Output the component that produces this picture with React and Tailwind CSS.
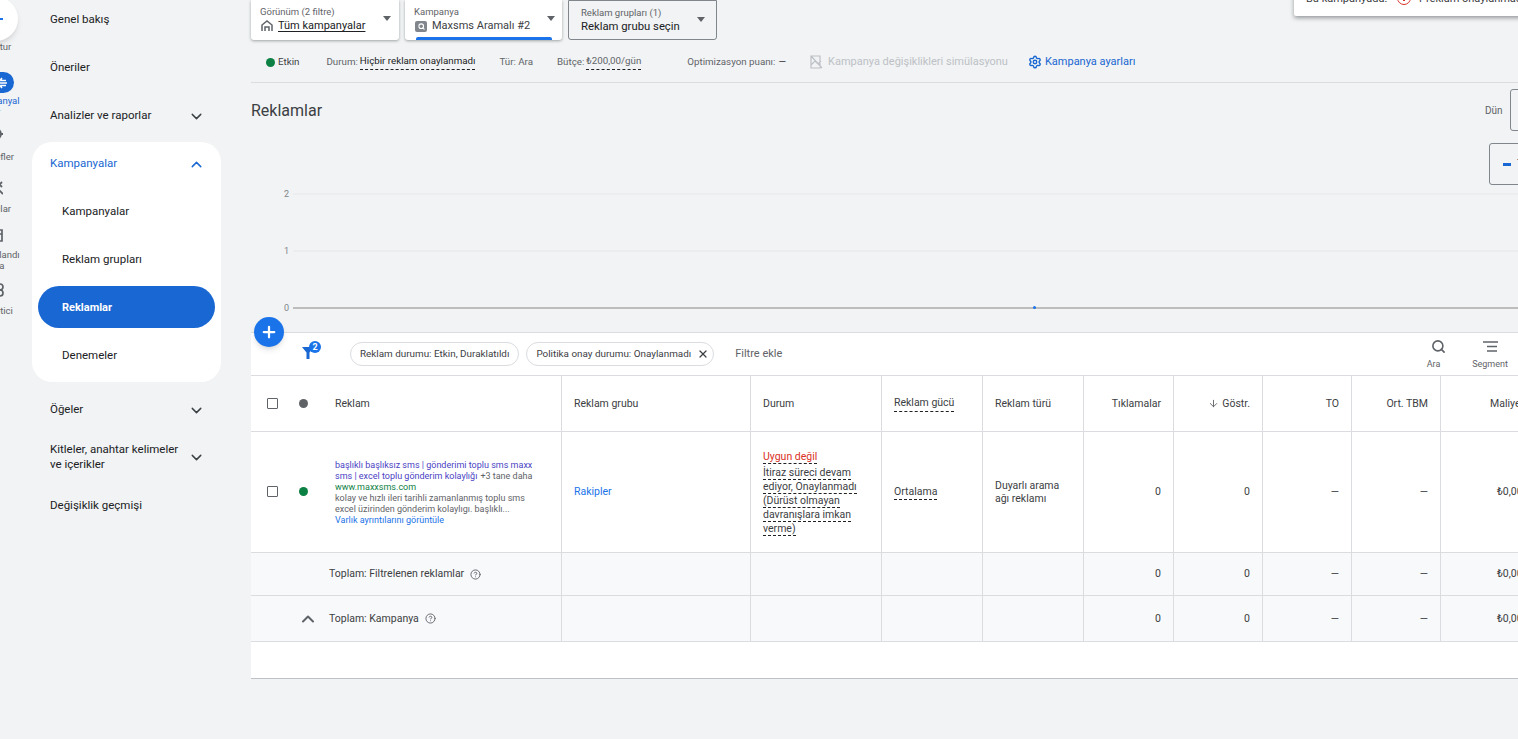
import { ChevronDown, ChevronUp, Search, X, ArrowDown, CircleHelp, Settings, Plus } from 'lucide-react'

const cols = 'grid grid-cols-[311px_189px_131px_101px_101px_90px_89px_89px_89px_120px]'
const cell = 'border-r border-[#dadce0] flex items-center text-[10.5px]'
const ink = 'text-[#3c4043]'
const dashed = 'border-b border-dashed border-[#202124]'

function NavItem({ label, sub, active, open, chevron, className = '' }) {
  return (
    <div className={`w-[189px] h-12 flex items-center text-[11.5px] shrink-0 ${sub ? 'pl-[30px] pr-3' : 'pl-[18px] pr-[16px]'} ${className}`}>
      <span className={active ? 'text-[#1967d2]' : 'text-[#202124]'}>{label}</span>
      {chevron && (open
        ? <ChevronUp className="ml-auto w-[17px] h-[17px] text-[#1967d2]" />
        : <ChevronDown className="ml-auto w-[17px] h-[17px] text-[#3c4043]" />)}
    </div>
  )
}

function Rail() {
  return (
    <div className="w-[80px] -ml-[44px] shrink-0 flex flex-col items-center text-[9.5px] leading-[11px] text-[#5f6368] text-center">
      <div className="w-[44px] h-[44px] mt-[-3px] rounded-full bg-white shadow-md flex items-center justify-center shrink-0">
        <div className="w-[14px] h-[2px] bg-[#1a73e8]" />
      </div>
      <div className="h-[12px] leading-[12px]">Oluştur</div>
      <div className="mt-[19px] w-[36px] h-[21px] rounded-full bg-[#1967d2] flex items-center justify-end pr-[7px] shrink-0">
        <svg width="14" height="12" viewBox="0 0 14 12" fill="none" stroke="white" strokeWidth="1.6"><path d="M9 1 5 6l4 5M5 6h9M8 3.5h5M8 8.5h5" /></svg>
      </div>
      <div className="text-[#1967d2] mt-[2px] h-[11px]">Kampanyal</div>
      <div className="text-[#1967d2] h-[11px]">ar</div>
      <svg className="mt-[10px] shrink-0" width="14" height="14" viewBox="0 0 14 14" fill="none" stroke="currentColor" strokeWidth="1.8"><circle cx="7" cy="7" r="5" /><path d="M7 0v14M0 7h14" /></svg>
      <div className="mt-[10px] h-[11px]">Hedefler</div>
      <svg className="mt-[19px] shrink-0" width="14" height="14" viewBox="0 0 14 14" fill="none" stroke="currentColor" strokeWidth="1.9"><path d="M1 13 13 1M9 8l5 5M8 1l5 5" /></svg>
      <div className="mt-[8px] h-[11px]">Araçlar</div>
      <svg className="mt-[14px] shrink-0" width="14" height="14" viewBox="0 0 14 14" fill="none" stroke="currentColor" strokeWidth="1.7"><path d="M1 2h12v11H1zM1 6h12M8 6v7" /></svg>
      <div className="mt-[7px] h-[11px]">Faturalandı</div>
      <div className="h-[11px]">rma</div>
      <svg className="mt-[12px] ml-[2px] shrink-0" width="14" height="14" viewBox="0 0 14 14" fill="none" stroke="currentColor" strokeWidth="1.7"><circle cx="10" cy="4" r="3" /><circle cx="10" cy="10" r="3" /></svg>
      <div className="mt-[8px] h-[11px]">Yönetici</div>
    </div>
  )
}

function Sidebar() {
  return (
    <div className="w-[220px] -ml-[4px] shrink-0 -mt-[4px] flex flex-col">
      <NavItem label="Genel bakış" />
      <NavItem label="Öneriler" />
      <NavItem label="Analizler ve raporlar" chevron />
      <div className="bg-white rounded-[20px] w-[189px] mt-[2px] mb-[4px] flex flex-col overflow-hidden">
        <NavItem label="Kampanyalar" active open chevron className="-mt-[2px]" />
        <NavItem label="Kampanyalar" sub />
        <NavItem label="Reklam grupları" sub />
        <div className="mx-[6px] h-[42px] mt-[2px] mb-[4px] pt-[2px] rounded-[21px] bg-[#1967d2] flex items-center pl-[24px] text-[11px] font-bold text-white shrink-0">Reklamlar</div>
        <NavItem label="Denemeler" sub className="mb-[2px]" />
      </div>
      <NavItem label="Öğeler" chevron />
      <div className="w-[189px] h-12 -mt-[1px] flex items-center pl-[18px] pr-[16px] text-[11.5px] leading-[15px] text-[#202124] shrink-0">
        <span className="w-[132px]">Kitleler, anahtar kelimeler ve içerikler</span>
        <ChevronDown className="ml-auto w-[17px] h-[17px] text-[#3c4043]" />
      </div>
      <NavItem label="Değişiklik geçmişi" className="mt-[1px]" />
    </div>
  )
}

function Caret({ className = '' }) {
  return <span className={`w-0 h-0 border-l-[4.5px] border-r-[4.5px] border-t-[5px] border-l-transparent border-r-transparent border-t-[#5f6368] ${className}`} />
}

function Selectors() {
  return (
    <div className="flex h-[40px] gap-[6px] items-stretch">
      <div className="w-[148px] bg-white rounded-b-[3px] shadow-[0_1px_3px_rgba(60,64,67,0.45)] pl-[9px] pr-[7px] pt-[6px] relative">
        <div className="text-[9.5px] leading-[12px] text-[#5f6368]">Görünüm (2 filtre)</div>
        <div className="flex items-center gap-[5px] text-[11px] leading-[14px] text-[#202124] mt-[1px] pl-[1px]">
          <svg width="12" height="12" viewBox="0 0 12 12" fill="none" stroke="#5f6368" strokeWidth="1.5"><path d="M1 11V5l5-4 5 4v6M4 11V7h4v4" /></svg>
          <span className="underline underline-offset-2">Tüm kampanyalar</span>
        </div>
        <Caret className="absolute right-[8px] top-[16px]" />
      </div>
      <div className="w-[157px] bg-white rounded-b-[3px] shadow-[0_1px_3px_rgba(60,64,67,0.45)] pl-[10px] pt-[6px] relative">
        <div className="text-[9.5px] leading-[12px] text-[#5f6368] -ml-[1px]">Kampanya</div>
        <div className="flex items-center gap-[5px] text-[11px] leading-[14px] text-[#3c4043] mt-[1px]">
          <span className="w-[12px] h-[11px] rounded-[2px] bg-[#80868b] flex items-center justify-center">
            <Search className="w-[7px] h-[7px] text-white" strokeWidth={3.5} />
          </span>
          <span>Maxsms Aramalı #2</span>
        </div>
        <Caret className="absolute right-[7px] top-[16px]" />
        <div className="absolute left-[11px] right-[10px] bottom-0 h-[3px] bg-[#1a73e8] rounded-t-[2px]" />
      </div>
      <div className="w-[149px] rounded-b-[3px] border border-[#80868b] pl-[12px] pt-[6px] relative">
        <div className="text-[9.5px] leading-[12px] text-[#5f6368]">Reklam grupları (1)</div>
        <div className="text-[11.3px] leading-[14px] text-[#202124] mt-[1px]">Reklam grubu seçin</div>
        <Caret className="absolute right-[11px] top-[16px]" />
      </div>
    </div>
  )
}

function StatusBar() {
  return (
    <div className="h-[42px] mt-[1px] border-b border-[#dadce0] flex items-center text-[9.75px] text-[#5f6368] pt-[1px]">
      <span className="w-[9px] h-[9px] ml-[15px] rounded-full bg-[#0d8043]" />
      <span className="ml-[3px] text-[#3c4043]">Etkin</span>
      <span className="ml-[27px]">Durum:</span>
      <span className={`ml-[2px] text-[#202124] ${dashed}`}>Hiçbir reklam onaylanmadı</span>
      <span className="ml-[24px]">Tür: Ara</span>
      <span className="ml-[24px]">Bütçe:</span>
      <span className={`ml-[2px] ${dashed}`}>₺200,00/gün</span>
      <span className="ml-[46px]">Optimizasyon puanı:</span>
      <span className="ml-[3px] text-[#202124]">—</span>
      <svg className="ml-[24px]" width="13" height="14" viewBox="0 0 13 14" fill="none" stroke="#bdc1c6" strokeWidth="1.2"><path d="M1 1h9v12H1zM1 1l11 12M1 10l4-4 3 3 3-3" /></svg>
      <span className="ml-[5px] text-[11px] text-[#bdc1c6]">Kampanya değişiklikleri simülasyonu</span>
      <Settings className="ml-[20px] w-[14px] h-[14px] text-[#1967d2]" strokeWidth={2.4} />
      <span className="ml-[3px] text-[11px] text-[#1967d2]">Kampanya ayarları</span>
    </div>
  )
}

function Chart() {
  const lines = [['2', 'bg-[#ebedef]'], ['1', 'bg-[#ebedef]'], ['0', 'bg-[#bdbdbd]']]
  return (
    <div className="relative h-[130px] mt-[47px] flex flex-col justify-between">
      {lines.map(([n, line]) => (
        <div key={n} className="flex items-center h-[16px]">
          <span className="w-[38px] mt-[2px] text-right text-[9px] text-[#80868b]">{n}</span>
          <div className={`flex-1 ml-[4px] h-[2px] ${line}`} />
        </div>
      ))}
      <span className="absolute left-[782px] top-[120px] w-[3px] h-[3px] rounded-full bg-[#1a73e8]" />
    </div>
  )
}

function Toolbar() {
  return (
    <div className="relative h-[43px] flex items-center border-b border-[#dadce0]">
      <div className="absolute left-[50px] top-[11px] h-[15px]">
        <svg width="14" height="15" viewBox="0 0 14 15" fill="#1967d2"><path d="M1 3h12L8.5 8.5V15h-3V8.5z" /></svg>
        <span className="absolute left-[8px] -top-[3px] w-[12px] h-[12px] rounded-full bg-[#1a73e8] text-white text-[9px] font-bold leading-[12px] text-center">2</span>
      </div>
      <div className="ml-[99px] h-[24px] px-[9px] rounded-full border border-[#dadce0] flex items-center text-[9.9px] text-[#3c4043]">Reklam durumu: Etkin, Duraklatıldı</div>
      <div className="ml-[7px] h-[24px] pl-[9px] pr-[4px] rounded-full border border-[#dadce0] flex items-center text-[9.9px] text-[#3c4043]">
        Politika onay durumu: Onaylanmadı
        <X className="ml-[6px] w-[12px] h-[12px] text-[#3c4043]" strokeWidth={2.4} />
      </div>
      <span className="ml-[21px] text-[11px] text-[#5f6368]">Filtre ekle</span>
      <div className="absolute left-[1170px] top-[6px] w-[25px] flex flex-col items-center text-[9px] text-[#5f6368]">
        <Search className="w-[15px] h-[15px] ml-[10px]" strokeWidth={2.6} />
        <span className="mt-[5px] leading-[11px]">Ara</span>
      </div>
      <div className="absolute left-[1219px] top-[6px] w-[40px] flex flex-col items-center text-[9px] text-[#5f6368]">
        <svg width="15" height="15" viewBox="0 0 15 15" stroke="currentColor" strokeWidth="1.5"><path d="M0 3h15M4 7.5h10M4 12h10" /></svg>
        <span className="mt-[5px] leading-[11px]">Segment</span>
      </div>
    </div>
  )
}

function Metrics() {
  return (
    <>
      {['0', '0', '—', '—'].map((v, i) => (
        <div key={i} className={`${cell} ${ink} justify-end pr-[12px]`}>{v}</div>
      ))}
      <div className={`flex items-center text-[10.5px] ${ink} whitespace-nowrap pl-[56px]`}>₺0,00</div>
    </>
  )
}

function Table() {
  return (
    <div className="bg-white border-b border-[#bdc1c6] h-[303px]">
      <div className={`${cols} h-[56px] border-b border-[#dadce0]`}>
        <div className={`${cell} ${ink}`}>
          <span className="ml-[16px] w-[11px] h-[11px] border border-[#5f6368] rounded-[1px]" />
          <span className="ml-[21px] w-[9px] h-[9px] rounded-full bg-[#5f6368]" />
          <span className="ml-[27px]">Reklam</span>
        </div>
        <div className={`${cell} ${ink} pl-[12px]`}>Reklam grubu</div>
        <div className={`${cell} ${ink} pl-[12px]`}>Durum</div>
        <div className={`${cell} ${ink} pl-[12px]`}><span className={dashed}>Reklam gücü</span></div>
        <div className={`${cell} ${ink} pl-[12px]`}>Reklam türü</div>
        <div className={`${cell} ${ink} justify-end pr-[12px]`}>Tıklamalar</div>
        <div className={`${cell} ${ink} justify-end pr-[12px]`}><ArrowDown className="w-[11px] h-[11px] mr-[3px] text-[#5f6368]" />Göstr.</div>
        <div className={`${cell} ${ink} justify-end pr-[12px]`}>TO</div>
        <div className={`${cell} ${ink} justify-end pr-[12px]`}>Ort. TBM</div>
        <div className={`flex items-center text-[10.5px] ${ink} pl-[49px] whitespace-nowrap`}>Maliyet</div>
      </div>
      <div className={`${cols} h-[121px] border-b border-[#dadce0]`}>
        <div className={`${cell} ${ink}`}>
          <span className="ml-[16px] mb-[2px] w-[11px] h-[11px] border border-[#5f6368] rounded-[1px] shrink-0" />
          <span className="ml-[21px] mb-[2px] w-[9px] h-[9px] rounded-full bg-[#0d8043] shrink-0" />
          <div className="ml-[27px] mt-[2px] w-[203px] text-[9px] leading-[11px] text-[#5f6368]">
            <span className="text-[#4a3fc4]">başlıklı başlıksız sms | gönderimi toplu sms maxx sms | excel toplu gönderim kolaylığı</span>
            <span className="ml-[3px]">+3 tane daha</span>
            <div className="text-[#0d8043]">www.maxxsms.com</div>
            <div>kolay ve hızlı ileri tarihli zamanlanmış toplu sms excel üzirinden gönderim kolaylıgı. başlıklı...</div>
            <div className="text-[#1a73e8]">Varlık ayrıntılarını görüntüle</div>
          </div>
        </div>
        <div className={`${cell} pl-[12px] text-[#1a73e8]`}>Rakipler</div>
        <div className={`${cell} ${ink} pl-[12px]`}>
          <div className="w-[100px] mt-[2px] leading-[13px]">
            <span className={`text-[#d93025] ${dashed}`}>Uygun değil</span>
            <div className="mt-[3px]">
              {['İtiraz süreci devam', 'ediyor, Onaylanmadı', '(Dürüst olmayan', 'davranışlara imkan', 'verme)'].map(t => (
                <span key={t} className={`${dashed} table whitespace-nowrap`}>{t}</span>
              ))}
            </div>
          </div>
        </div>
        <div className={`${cell} ${ink} pl-[12px]`}><span className={dashed}>Ortalama</span></div>
        <div className={`${cell} ${ink} pl-[12px] leading-[13px]`}><span className="w-[80px]">Duyarlı arama ağı reklamı</span></div>
        <Metrics />
      </div>
      <div className={`${cols} h-[43px] border-b border-[#dadce0] bg-[#f8f9fa]`}>
        <div className={`${cell} ${ink} pl-[78px]`}>Toplam: Filtrelenen reklamlar<CircleHelp className="ml-[6px] w-[11px] h-[11px] text-[#5f6368]" /></div>
        <div className={cell} /><div className={cell} /><div className={cell} /><div className={cell} />
        <Metrics />
      </div>
      <div className={`${cols} h-[46px] border-b border-[#dadce0] bg-[#f8f9fa]`}>
        <div className={`${cell} ${ink}`}>
          <ChevronUp className="ml-[47px] w-[20px] h-[20px] text-[#5f6368]" strokeWidth={2.4} />
          <span className="ml-[11px]">Toplam: Kampanya</span>
          <CircleHelp className="ml-[6px] w-[11px] h-[11px] text-[#5f6368]" />
        </div>
        <div className={cell} /><div className={cell} /><div className={cell} /><div className={cell} />
        <Metrics />
      </div>
    </div>
  )
}

export default function App() {
  return (
    <div className="w-[1518px] h-[739px] overflow-hidden bg-[#f1f3f4] flex relative font-['Roboto',sans-serif]">
      <Rail />
      <Sidebar />
      <div className="w-[1400px] shrink-0 ml-[-1px]">
        <Selectors />
        <StatusBar />
        <div className="h-[56px] flex items-center justify-between relative">
          <h1 className="text-[16px] text-[#3c4043] font-normal">Reklamlar</h1>
          <span className="absolute left-[1234px] top-[20px] text-[10px] text-[#5f6368]">Dün</span>
          <div className="absolute left-[1259px] top-[6px] w-[40px] h-[42px] rounded-[3px] border border-[#80868b]" />
        </div>
        <div className="relative h-0">
          <div className="absolute left-[1238px] top-[4px] w-[90px] h-[42px] rounded-[3px] border border-[#80868b] flex items-center pl-[13px] text-[11px] text-[#3c4043] whitespace-nowrap">
            <span className="w-[8px] h-[3px] bg-[#1967d2] shrink-0" />
            <span className="ml-[6px]">Tıklamalar</span>
          </div>
        </div>
        <Chart />
        <div className="relative h-[1px] mt-[16px] bg-[#dadce0]">
          <button className="absolute left-[3px] -top-[15px] z-10 w-[30px] h-[30px] rounded-full bg-[#1a73e8] shadow-md flex items-center justify-center">
            <Plus className="w-[18px] h-[18px] text-white" strokeWidth={3} />
          </button>
        </div>
        <div className="bg-white"><Toolbar /></div>
        <Table />
      </div>
      <div className="absolute left-[1294px] -top-[10px] w-[300px] h-[26px] bg-white rounded-[2px] shadow-[0_2px_4px_rgba(60,64,67,0.5)] flex items-end pb-[11px] pl-[12px] text-[11px] leading-[13px] text-[#3c4043] whitespace-nowrap">
        Bu kampanyada:
        <span className="ml-[10px] w-[14px] h-[14px] rounded-full border-[1.5px] border-[#d93025] flex justify-center">
          <span className="w-[1.5px] h-[5px] mt-[4px] bg-[#d93025]" />
        </span>
        <span className="ml-[6px]">1 reklam onaylanmadı</span>
      </div>
    </div>
  )
}
